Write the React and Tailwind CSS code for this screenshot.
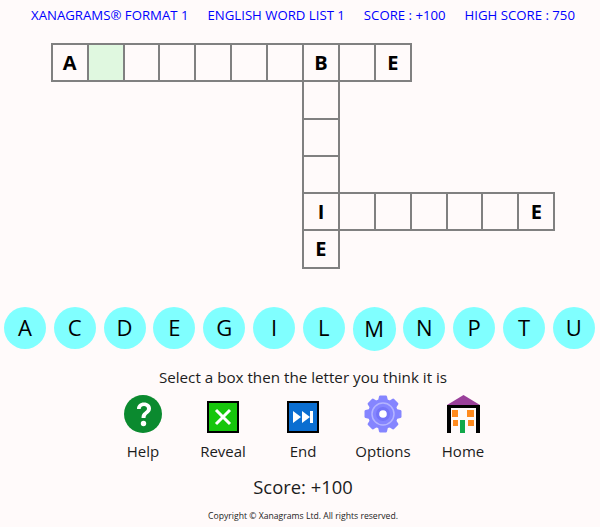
const LETTERS = ['A', 'C', 'D', 'E', 'G', 'I', 'L', 'M', 'N', 'P', 'T', 'U'];

// crossword rows: '.' = no box, '_' = empty box, '#' = selected box
const ROWS = [
  ['A', '#', '_', '_', '_', '_', '_', 'B', '_', 'E', '.', '.', '.', '.'],
  ['.', '.', '.', '.', '.', '.', '.', '_', '.', '.', '.', '.', '.', '.'],
  ['.', '.', '.', '.', '.', '.', '.', '_', '.', '.', '.', '.', '.', '.'],
  ['.', '.', '.', '.', '.', '.', '.', '_', '.', '.', '.', '.', '.', '.'],
  ['.', '.', '.', '.', '.', '.', '.', 'I', '_', '_', '_', '_', '_', 'E'],
  ['.', '.', '.', '.', '.', '.', '.', 'E', '.', '.', '.', '.', '.', '.'],
];

const HelpIcon = () => (
  <svg width="38" height="38" viewBox="0 0 38 38">
    <circle cx="19" cy="19" r="19" fill="#0b8a2f" />
    <path d="M13 14c0-4 3-6.500 7-6.500s7 2.500 7 6c0 5-5.500 5-5.500 9.500h-4c0-6.500 5.500-6 5.500-9.500 0-1.500-1.300-2.500-3-2.500-2 0-3.200 1.200-3.300 3z" fill="#fff" />
    <circle cx="19.500" cy="28.500" r="2.700" fill="#fff" />
  </svg>
);

const RevealIcon = () => (
  <svg width="32" height="32" viewBox="0 0 32 32">
    <rect x="1" y="1" width="30" height="30" fill="#16c60c" stroke="#000" strokeWidth="2" />
    <path d="M9 9l14 14M23 9L9 23" stroke="#fff" strokeWidth="3" />
  </svg>
);

const EndIcon = () => (
  <svg width="32" height="32" viewBox="0 0 32 32">
    <rect x="1" y="1" width="30" height="30" fill="#0a6ed1" stroke="#000" strokeWidth="2" />
    <path d="M6 10l8 6-8 6zM15 10l8 6-8 6z" fill="#fff" />
    <rect x="23" y="10" width="3" height="12" fill="#fff" />
  </svg>
);

const OptionsIcon = () => (
  <svg width="38" height="38" viewBox="0 0 38 38">
    <g fill="#8585ff">
      <circle cx="19" cy="19" r="15" />
      {[0, 45, 90, 135, 180, 225, 270, 315].map((deg) => (
        <path key={deg} d="M13.500 8l1.500-6.500q.2-1 1.200-1h5.600q1 0 1.200 1L24.500 8z" transform={`rotate(${deg} 19 19)`} />
      ))}
    </g>
    <circle cx="19" cy="19" r="11" fill="none" stroke="#b4b4ff" strokeWidth="1.500" />
    <circle cx="19" cy="19" r="7" fill="#7575f8" />
    <circle cx="19" cy="19" r="3.800" fill="#fff" />
  </svg>
);

const HomeIcon = () => (
  <svg width="33" height="38" viewBox="0 0 33 38">
    <path d="M16.500 0L33 10H0z" fill="#9a3f9a" />
    <path d="M0 10h33v28h-4V13H4v25H0z" fill="#000" />
    <rect x="5" y="15" width="6" height="7" fill="#ff8a1e" />
    <rect x="20" y="15" width="7" height="7" fill="#ff8a1e" />
    <rect x="6" y="25" width="5" height="6" fill="#ff8a1e" />
    <rect x="21" y="25" width="6" height="6" fill="#ff8a1e" />
    <rect x="13" y="25" width="5" height="13" fill="#12a84a" />
  </svg>
);

const TOOLS = [
  { label: 'Help', icon: <HelpIcon /> },
  { label: 'Reveal', icon: <RevealIcon /> },
  { label: 'End', icon: <EndIcon /> },
  { label: 'Options', icon: <OptionsIcon /> },
  { label: 'Home', icon: <HomeIcon /> },
];

export default function App() {
  return (
    <div className="w-[600px] h-[527px] overflow-hidden bg-[#fffafa]">
      <div className="w-[606px] flex flex-col items-center text-[#1c1c1c] font-['Open_Sans',sans-serif]">
        <div className="flex gap-[19px] pt-[6px] h-[43px] text-[13.200px] leading-[18px] text-[#0000ff]">
          <span>XANAGRAMS® FORMAT 1</span>
          <span>ENGLISH WORD LIST 1</span>
          <span>SCORE : +100</span>
          <span>HIGH SCORE : 750</span>
        </div>

        <table className="border-collapse">
          <tbody>
            {ROWS.map((row, r) => (
              <tr key={r}>
                {row.map((cell, c) =>
                  cell === '.' ? (
                    <td key={c} className="w-[35.900px] h-[37.300px] p-0" />
                  ) : (
                    <td
                      key={c}
                      className={`w-[35.900px] h-[37.300px] p-0 border-2 border-[#808080] text-center text-[20px] font-bold text-black ${
                        cell === '#' ? 'bg-[#e0f8e0]' : ''
                      }`}
                    >
                      {cell !== '_' && cell !== '#' ? cell : ''}
                    </td>
                  )
                )}
              </tr>
            ))}
          </tbody>
        </table>

        <div className="flex items-start gap-[7.800px] self-start ml-1 mt-[38px] text-[22px] text-black">
          {LETTERS.map((l) => (
            <div
              key={l}
              className={`${l === 'M' ? 'w-[43px] h-11' : 'w-[42px] h-[42px]'} rounded-full bg-[#80ffff] flex items-center justify-center`}
            >
              {l}
            </div>
          ))}
        </div>

        <p className="mt-[16px] text-[15.200px] leading-5">Select a box then the letter you think it is</p>

        <div className="flex mt-[8px]">
          {TOOLS.map((t) => (
            <div key={t.label} className="w-20 flex flex-col items-center">
              <div className="h-[38px] flex items-end justify-center">{t.icon}</div>
              <span className="mt-[8px] text-[15px] leading-5">{t.label}</span>
            </div>
          ))}
        </div>

        <p className="mt-[14px] text-[18.400px] leading-6">Score: +100</p>
        <p className="mt-[11px] text-[8.650px] leading-3">Copyright © Xanagrams Ltd. All rights reserved.</p>
      </div>
    </div>
  );
}
